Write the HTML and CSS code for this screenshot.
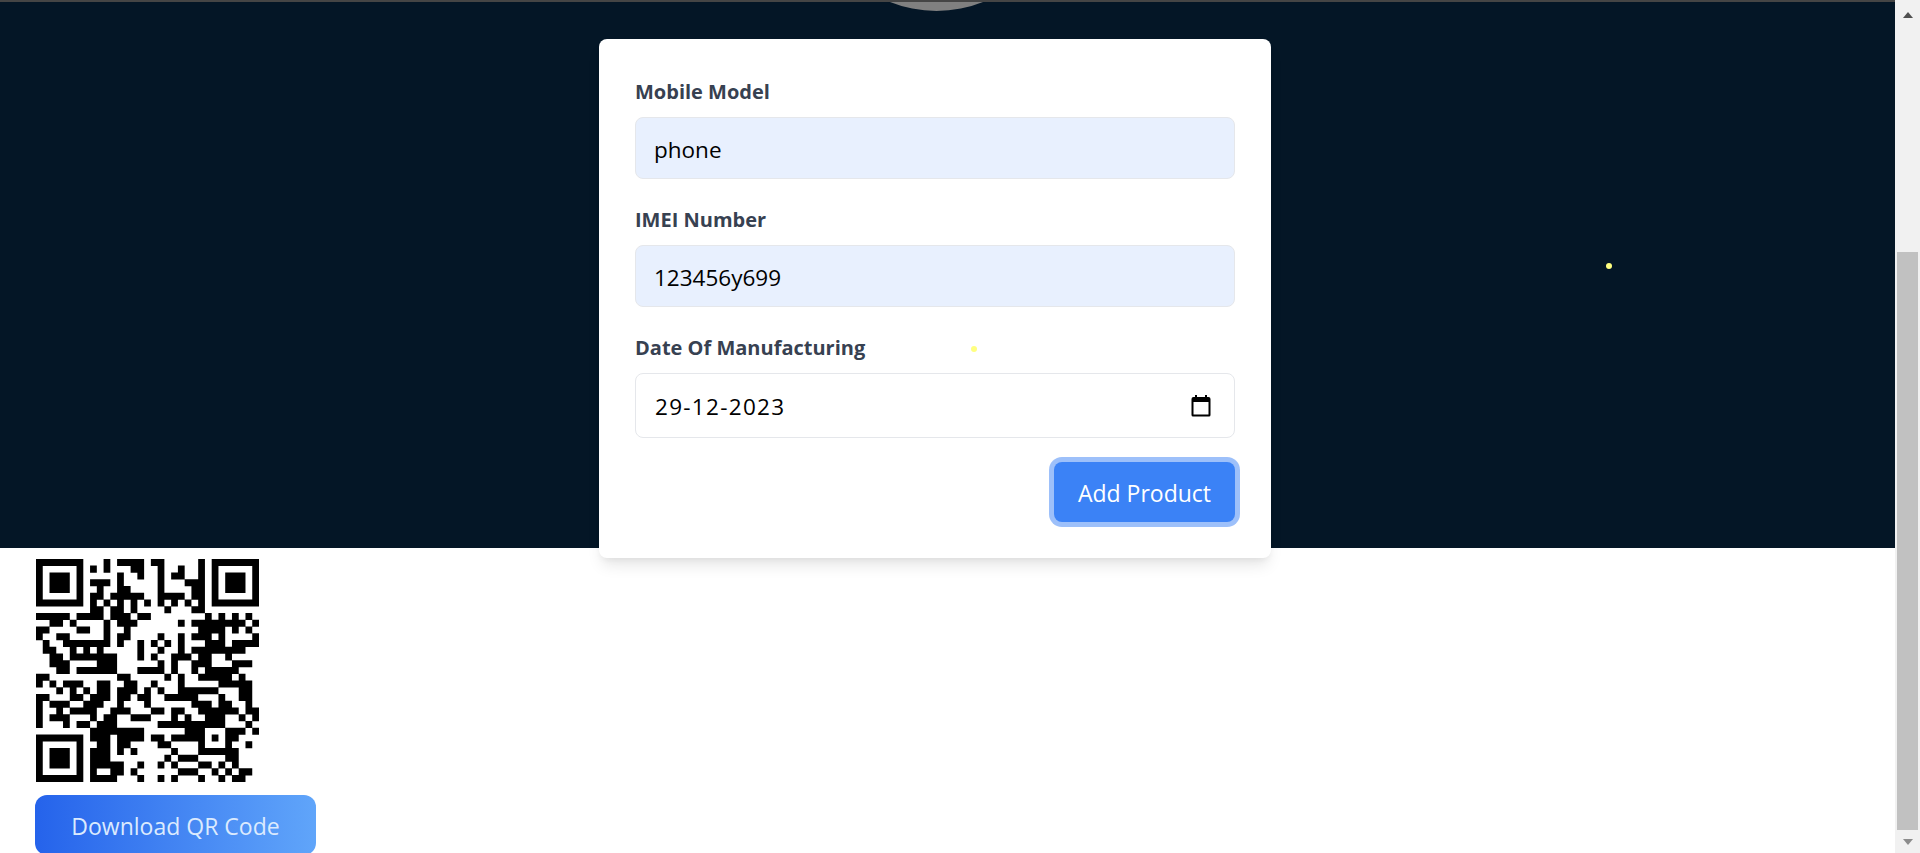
FILE: index.html
```html
<!DOCTYPE html>
<html lang="en">
<head>
    <meta charset="UTF-8">
    <title>Add Product</title>
    <link rel="stylesheet" href="styles.css">
</head>
<body>
    <div class="page">
        <div class="top-line"></div>
        <div class="hero">
            <div class="avatar"></div>
            <span class="star star-one"></span>
            <span class="star star-two"></span>
            <form class="card">
                <div class="field">
                    <label>Mobile Model</label>
                    <input class="input autofilled" type="text" value="phone">
                </div>
                <div class="field">
                    <label>IMEI Number</label>
                    <input class="input autofilled" type="text" value="123456y699">
                </div>
                <div class="field">
                    <label>Date Of Manufacturing</label>
                    <div class="input date-input">
                        <input type="text" value="29-12-2023">
                        <svg width="20" height="22" viewBox="0 0 20 22">
                            <path d="M4 0h2v2h8V0h2v2h1.500A2 2 0 0 1 19.500 4v16a1.500 1.500 0 0 1-1.500 1.500H2A1.500 1.500 0 0 1 .5 20V4A2 2 0 0 1 2.500 2H4zM2.500 7v12.500h15V7z"/>
                        </svg>
                    </div>
                </div>
                <div class="actions">
                    <button class="button primary" type="button">Add Product</button>
                </div>
            </form>
        </div>
        <div class="qr-section">
            <svg class="qr" viewBox="0 0 33 33">
                <path stroke="#000" stroke-width="1.04" fill="none" d="
                M0 .5h7M10 .5h1M12 .5h4M17 .5h2M24 .5h1M26 .5h7
                M0 1.500h1M6 1.500h1M8 1.500h1M10 1.500h1M14 1.500h2M18 1.500h1M21 1.500h1M24 1.500h1M26 1.500h1M32 1.500h1
                M0 2.500h1M2 2.500h3M6 2.500h1M12 2.500h1M15 2.500h1M18 2.500h1M20 2.500h2M24 2.500h1M26 2.500h1M28 2.500h3M32 2.500h1
                M0 3.500h1M2 3.500h3M6 3.500h1M8 3.500h3M12 3.500h1M18 3.500h1M22 3.500h3M26 3.500h1M28 3.500h3M32 3.500h1
                M0 4.500h1M2 4.500h3M6 4.500h1M9 4.500h1M12 4.500h2M18 4.500h1M23 4.500h2M26 4.500h1M28 4.500h3M32 4.500h1
                M0 5.500h1M6 5.500h1M8 5.500h2M11 5.500h5M18 5.500h4M23 5.500h2M26 5.500h1M32 5.500h1
                M0 6.500h7M8 6.500h1M10 6.500h1M12 6.500h1M14 6.500h1M16 6.500h1M18 6.500h1M20 6.500h1M22 6.500h1M24 6.500h1M26 6.500h7
                M8 7.500h2M11 7.500h2M14 7.500h1M19 7.500h1M23 7.500h2
                M0 8.500h5M6 8.500h4M11 8.500h3M15 8.500h2M25 8.500h1M27 8.500h1M29 8.500h1M31 8.500h1
                M2 9.500h2M5 9.500h1M10 9.500h1M12 9.500h2M14 9.500h1M21 9.500h1M23 9.500h7M30 9.500h1M32 9.500h1
                M0 10.500h2M6 10.500h2M10 10.500h1M13 10.500h1M24 10.500h4M29 10.500h1M31 10.500h1
                M0 11.500h1M3 11.500h2M10 11.500h1M12 11.500h2M18 11.500h1M21 11.500h1M23 11.500h3M27 11.500h1M32 11.500h1
                M1 12.500h1M4 12.500h2M6 12.500h5M12 12.500h1M15 12.500h1M17 12.500h1M19 12.500h1M21 12.500h1M25 12.500h3M29 12.500h4
                M1 13.500h2M5 13.500h1M7 13.500h1M9 13.500h1M15 13.500h1M18 13.500h1M21 13.500h1M23 13.500h8
                M2 14.500h2M5 14.500h7M15 14.500h1M17 14.500h1M20 14.500h3M24 14.500h2M28 14.500h1
                M2 15.500h3M9 15.500h3M18 15.500h1M20 15.500h1M23 15.500h3M29 15.500h3
                M3 16.500h2M6 16.500h6M15 16.500h4M20 16.500h1M23 16.500h1M25 16.500h5
                M0 17.500h2M12 17.500h2M19 17.500h1M21 17.500h1M24 17.500h5M30 17.500h1
                M0 18.500h1M2 18.500h1M4 18.500h3M9 18.500h2M13 18.500h2M17 18.500h1M21 18.500h1M27 18.500h5
                M3 19.500h1M5 19.500h1M7 19.500h1M9 19.500h2M12 19.500h3M16 19.500h1M18 19.500h1M21 19.500h6M30 19.500h2
                M0 20.500h2M5 20.500h2M8 20.500h3M12 20.500h2M15 20.500h2M19 20.500h5M27 20.500h1M30 20.500h2
                M0 21.500h1M2 21.500h3M7 21.500h3M12 21.500h1M16 21.500h1M23 21.500h3M27 21.500h2M31 21.500h1
                M0 22.500h1M3 22.500h1M5 22.500h3M8 22.500h1M11 22.500h3M17 22.500h2M20 22.500h2M24 22.500h6M31 22.500h2
                M0 23.500h1M2 23.500h3M8 23.500h1M10 23.500h2M14 23.500h3M20 23.500h1M22 23.500h1M25 23.500h3M30 23.500h1M32 23.500h1
                M0 24.500h1M4 24.500h1M6 24.500h2M9 24.500h3M18 24.500h10M31 24.500h1
                M8 25.500h8M22 25.500h3M28 25.500h3M32 25.500h1
                M0 26.500h7M8 26.500h3M12 26.500h4M17 26.500h2M20 26.500h5M26 26.500h1M28 26.500h2
                M0 27.500h1M6 27.500h1M9 27.500h2M12 27.500h2M18 27.500h2M24 27.500h1M28 27.500h1M31 27.500h1
                M0 28.500h1M2 28.500h3M6 28.500h1M8 28.500h3M12 28.500h1M14 28.500h1M20 28.500h1M24 28.500h6
                M0 29.500h1M2 29.500h3M6 29.500h1M8 29.500h3M19 29.500h1M21 29.500h3M28 29.500h2
                M0 30.500h1M2 30.500h3M6 30.500h1M8 30.500h5M15 30.500h1M18 30.500h1M20 30.500h1M24 30.500h2M27 30.500h1M29 30.500h1
                M0 31.500h1M6 31.500h1M8 31.500h1M11 31.500h2M14 31.500h1M21 31.500h3M26 31.500h1M28 31.500h1M30 31.500h2
                M0 32.500h7M8 32.500h4M15 32.500h1M18 32.500h1M20 32.500h1M24 32.500h1M27 32.500h1M29 32.500h2
                "/>
            </svg>
            <button class="button download" type="button">Download QR Code</button>
        </div>
    </div>
    <div class="scrollbar">
        <span class="arrow up"></span>
        <div class="thumb"></div>
        <span class="arrow down"></span>
    </div>
</body>
</html>
```

FILE: styles.css
```css
* {
    box-sizing: border-box;
}
body {
    margin: 0;
    height: 853px;
    display: flex;
    overflow: hidden;
    background-color: #fff;
    font-family: "Open Sans", "Noto Sans", sans-serif;
}
.page {
    flex: 1;
    min-width: 0;
}
.top-line {
    height: 2px;
    background-color: #454545;
}
.hero {
    position: relative;
    height: 546px;
    display: flex;
    justify-content: center;
    align-items: flex-start;
    padding: 37px 25px 0 0;
    background-color: #041626;
}
.avatar {
    position: absolute;
    left: 812px;
    top: -240px;
    width: 249px;
    height: 249px;
    border-radius: 50%;
    background-color: #808080;
    clip-path: inset(240px 0 0 0);
}
.star {
    position: absolute;
    z-index: 2;
    width: 6px;
    height: 6px;
    border-radius: 50%;
    background-color: #ffff80;
}
.star-one {
    left: 971px;
    top: 344px;
}
.star-two {
    left: 1606px;
    top: 261px;
}
.card {
    position: relative;
    z-index: 1;
    width: 672px;
    height: 519px;
    padding: 36px;
    border-radius: 8px;
    background-color: #fff;
    box-shadow: 0 10px 15px -3px rgba(0, 0, 0, 0.1), 0 4px 6px -2px rgba(0, 0, 0, 0.05);
}
.field {
    margin-bottom: 24px;
}
.field label {
    display: block;
    margin-bottom: 8px;
    font-size: 20px;
    line-height: 34px;
    font-weight: 700;
    color: #374151;
}
.input {
    display: block;
    width: 100%;
    height: 62px;
    padding: 2px 18px 0;
    border: 1px solid #e5e7eb;
    border-radius: 8px;
    font-family: inherit;
    font-size: 22.500px;
    color: #000;
    background-color: #fff;
}
.autofilled {
    background-color: #e8f0fe;
}
.date-input {
    display: flex;
    align-items: center;
    height: 65px;
    padding: 0 23px 0 19px;
}
.date-input input {
    flex: 1;
    min-width: 0;
    padding: 2px 0 0;
    border: 0;
    font-family: inherit;
    font-size: 22.500px;
    letter-spacing: 1.300px;
    color: #000;
    background: transparent;
}
.button {
    height: 60px;
    padding: 2px 0 0;
    border: 0;
    border-radius: 8px;
    font-family: inherit;
    font-size: 23px;
    color: #fff;
}
.actions {
    display: flex;
    justify-content: flex-end;
}
.button.primary {
    width: 181px;
    background-color: #3b82f6;
    box-shadow: 0 0 0 5px rgba(59, 130, 246, 0.5);
}
.qr-section {
    padding: 11px 0 0 35px;
}
.qr {
    display: block;
    width: 223px;
    height: 223px;
    margin-left: 1px;
}
.download {
    display: block;
    width: 281px;
    margin-top: 13px;
    border-radius: 12px;
    color: #dbeafe;
    background: linear-gradient(to right, #2563eb, #60a5fa);
}
.scrollbar {
    width: 25px;
    display: flex;
    flex-direction: column;
    align-items: center;
    background-color: #f1f1f1;
}
.arrow {
    width: 0;
    height: 0;
    border-left: 5px solid transparent;
    border-right: 5px solid transparent;
}
.arrow.up {
    margin: 12px 0 234px;
    border-bottom: 6px solid #505050;
}
.thumb {
    flex: none;
    width: 21px;
    height: 578px;
    background-color: #c1c1c1;
}
.arrow.down {
    margin-top: 9px;
    border-top: 6px solid #8c8c8c;
}
```
